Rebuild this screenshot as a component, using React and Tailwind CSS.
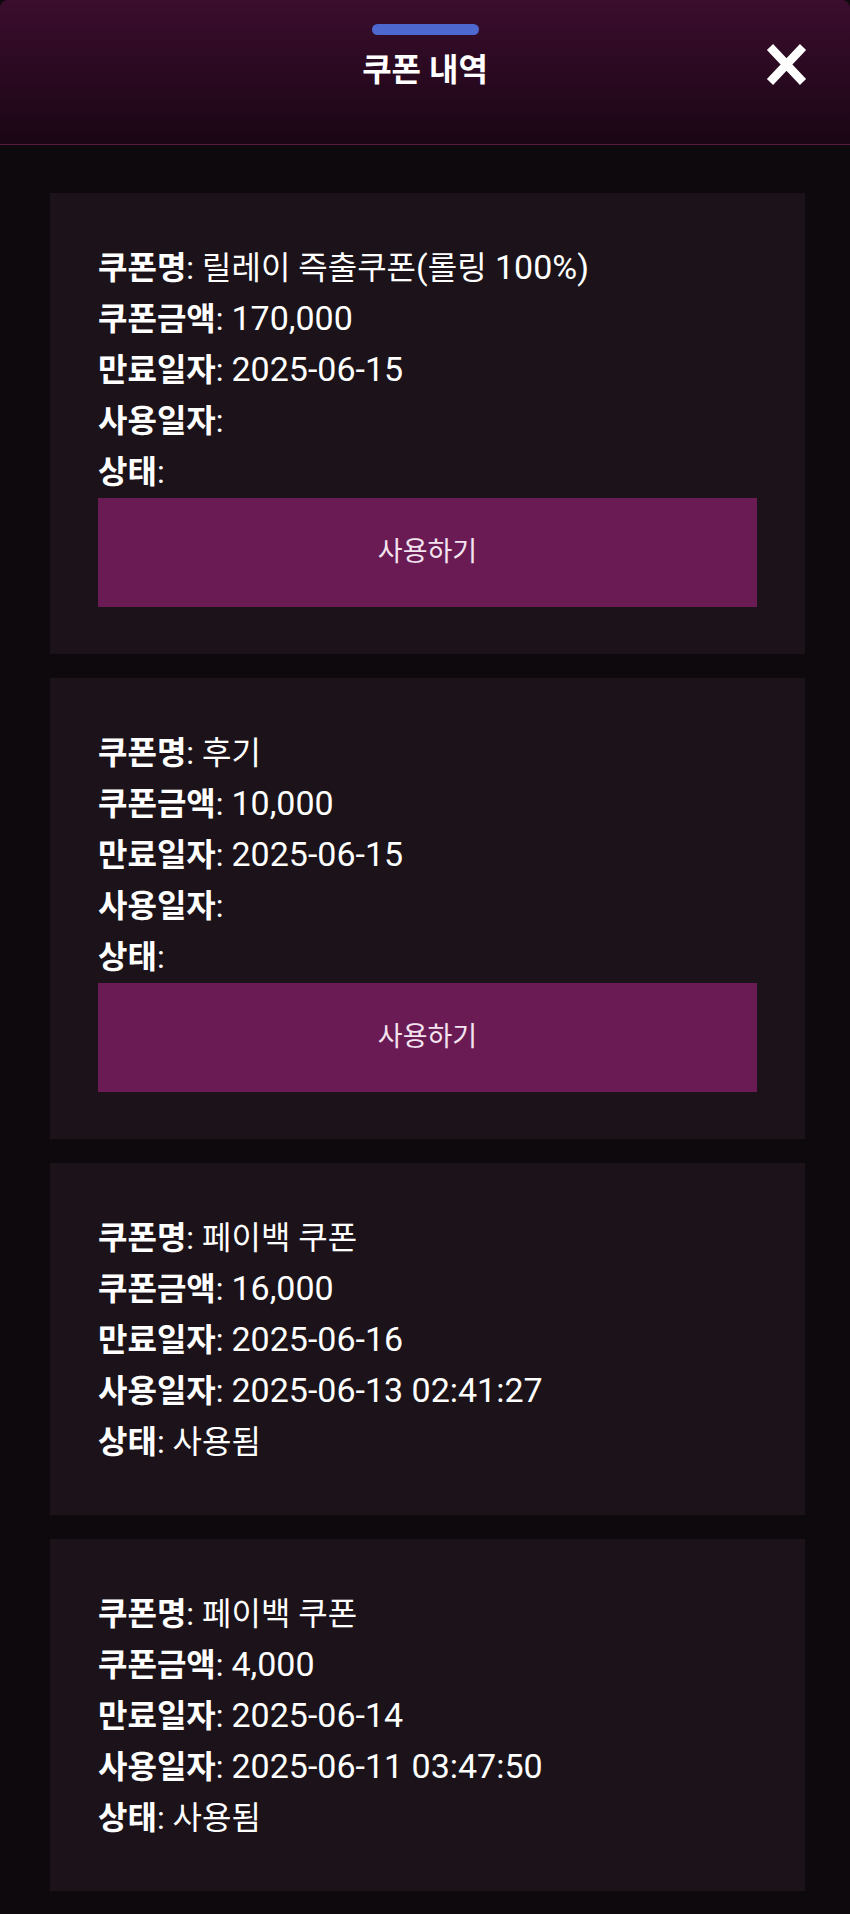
const coupons = [
  { name: "릴레이 즉출쿠폰(롤링 100%)", amount: "170,000", expire: "2025-06-15", used: "", status: "", usable: true },
  { name: "후기", amount: "10,000", expire: "2025-06-15", used: "", status: "", usable: true },
  { name: "페이백 쿠폰", amount: "16,000", expire: "2025-06-16", used: "2025-06-13 02:41:27", status: "사용됨", usable: false },
  { name: "페이백 쿠폰", amount: "4,000", expire: "2025-06-14", used: "2025-06-11 03:47:50", status: "사용됨", usable: false },
]

// latin runs render a touch larger than the hangul in the original
function Value({ text }) {
  return text.split(/([0-9:,\-%() ]*[0-9%()][0-9:,\-%() ]*)/).map((part, i) =>
    /[0-9%()]/.test(part) ? (
      <span key={i} className="text-[34px] leading-none">{part}</span>
    ) : (
      <span key={i}>{part}</span>
    )
  )
}

function Row({ label, value }) {
  return (
    <p className="h-[51px] leading-[51px] text-white whitespace-nowrap overflow-visible">
      <span className="font-bold">{label}</span>: <Value text={value} />
    </p>
  )
}

function CouponCard({ coupon }) {
  return (
    <div className="bg-[#1b1319] px-12 pt-[50px] pb-[47px]">
      <Row label="쿠폰명" value={coupon.name} />
      <Row label="쿠폰금액" value={coupon.amount} />
      <Row label="만료일자" value={coupon.expire} />
      <Row label="사용일자" value={coupon.used} />
      <Row label="상태" value={coupon.status} />
      {coupon.usable && (
        <button className="w-full h-[109px] bg-[#6a1b54] text-[27px] text-[#f3e4f0] flex items-center justify-center">
          사용하기
        </button>
      )}
    </div>
  )
}

export default function App() {
  return (
    <div className="w-[850px] min-h-[1914px] bg-[#0d090c] font-['Roboto','Noto_Sans_CJK_KR',sans-serif] text-[32px]">
      <header className="relative h-[145px] rounded-t-lg bg-gradient-to-b from-[#3b0d2e] to-[#1a0614] border-b border-[#5a1a3e] flex flex-col items-center pt-[24px]">
        <div className="w-[107px] h-[11px] rounded-full bg-[#4d69cf]" />
        <h1 className="mt-[13px] text-[32px] font-bold text-white leading-[44px]">쿠폰 내역</h1>
        <button className="absolute right-[43px] top-[43px] w-[41px] h-[43px]">
          <svg viewBox="0 0 41 43" width="41" height="43">
            <path d="M4 4 L37 39 M37 4 L4 39" stroke="#ffffff" strokeWidth="8.5" fill="none" />
          </svg>
        </button>
      </header>
      <main className="pl-[50px] pr-[45px] pt-12 pb-[21px] flex flex-col gap-6">
        {coupons.map((c, i) => (
          <CouponCard key={i} coupon={c} />
        ))}
      </main>
    </div>
  )
}
